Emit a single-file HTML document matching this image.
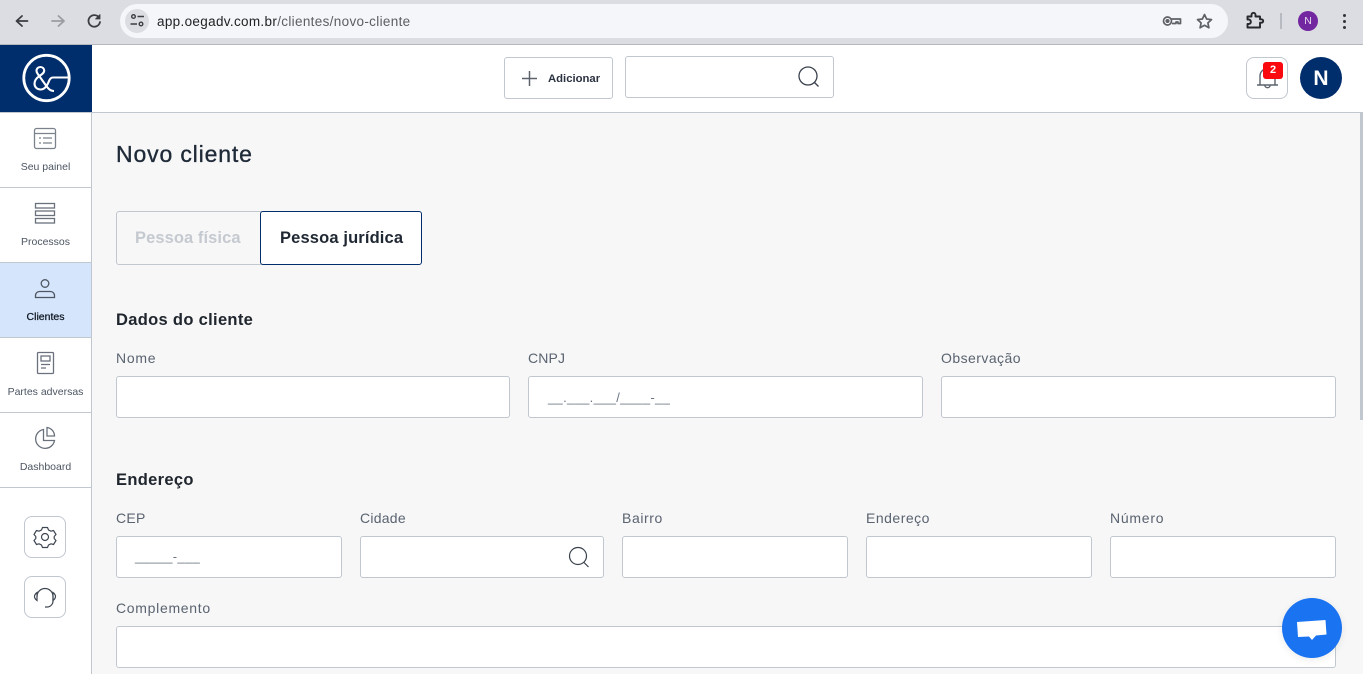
<!DOCTYPE html>
<html lang="pt-BR"><head><meta charset="utf-8"><title>Novo cliente</title>
<style>
*{box-sizing:border-box}
html,body{margin:0;padding:0;width:1363px;height:674px;overflow:hidden;background:#f7f7f7;font-family:"Liberation Sans",sans-serif;color:#1c2533}
.a{position:absolute}
svg{position:absolute;overflow:visible}
.inp{position:absolute;height:42px;background:#fff;border:1px solid #c1c7cf;border-radius:3px}
.lbl{position:absolute;font-size:14px;line-height:18px;color:#5a6370;white-space:nowrap;letter-spacing:.25px}
.h2{position:absolute;font-size:16.5px;font-weight:bold;line-height:20px;color:#20262e;white-space:nowrap;letter-spacing:.32px}
.nav{position:absolute;left:0;width:91px;height:75px;border-bottom:1px solid #c1c7cf;background:#fff}
.nav span{position:absolute;left:0;width:91px;text-align:center;top:47px;font-size:10.5px;line-height:14px;color:#4c5562;white-space:nowrap}
.ph{position:absolute;font-size:13px;color:#6b7380;white-space:nowrap;letter-spacing:.32px}
.sq{position:absolute;left:24px;width:42px;height:42px;border:1px solid #c1c7cf;border-radius:8px;background:#fff}
</style></head><body>

<!-- browser chrome -->
<div class="a" style="left:0;top:0;width:1363px;height:45px;background:#dcdde2;border-bottom:1px solid #b5b7bc"></div>
<svg style="left:0;top:0" width="110" height="44" fill="none" stroke-linecap="round" stroke-linejoin="round">
<path d="M27.500 21H17M22 16l-5.500 5 5.500 5" stroke="#3b3d42" stroke-width="1.800"/>
<path d="M52 21h11.500M58.500 16l5.500 5-5.500 5" stroke="#9a9ca1" stroke-width="1.800"/>
<path d="M99 17.500a5.800 5.800 0 1 0 1 4.500" stroke="#3b3d42" stroke-width="1.800"/>
<path d="M100 14.500v4.500h-4.500z" fill="#3b3d42" stroke="#3b3d42" stroke-width=".8"/>
</svg>
<div class="a" style="left:120px;top:4px;width:1108px;height:34px;border-radius:17px;background:#f4f6f9"></div>
<div class="a" style="left:125px;top:9px;width:24px;height:24px;border-radius:12px;background:#dcdde2"></div>
<svg style="left:125px;top:9px" width="24" height="24" fill="none" stroke="#3b3d42" stroke-width="1.400">
<circle cx="8.500" cy="7.500" r="1.800"/><path d="M12.500 7.500H19M5.500 15H12"/><circle cx="16" cy="15" r="1.800"/>
</svg>
<div class="a" style="left:157px;top:14px;font-size:13.500px;line-height:16px;color:#222;white-space:nowrap;letter-spacing:.33px">app.oegadv.com.br<span style="color:#5b5e63">/clientes/novo-cliente</span></div>
<svg style="left:1160px;top:10px" width="60" height="24" fill="none" stroke="#5e6166" stroke-width="1.700" stroke-linejoin="round">
<circle cx="7.500" cy="11" r="4"/><path d="M11.500 9H20.500V13.500H18V12H16V13.500H12"/><circle cx="7.500" cy="11" r="1.200" fill="#5e6166"/>
<path d="M44.500 4.500l2.100 4.500 4.900.6-3.600 3.300 1 4.900-4.400-2.500-4.400 2.500 1-4.900-3.600-3.300 4.900-.6z"/>
</svg>
<svg style="left:1244px;top:10px" width="24" height="24" fill="none" stroke="#26282c" stroke-width="1.900" stroke-linejoin="round">
<path d="M3.500 6.500H7.500V4.800A2 2 0 0 1 11.500 4.800V6.500H16V9.300H17.500A1.700 1.700 0 0 1 17.500 12.700H16V17.500H3.500V14H5A2.300 2.300 0 0 0 5 9.500H3.500Z"/>
</svg>
<div class="a" style="left:1280px;top:13px;width:2px;height:16px;background:#b7bac0"></div>
<div class="a" style="left:1298px;top:11px;width:20px;height:20px;border-radius:10px;background:#7226a0;color:#e8dcf0;font-size:10.500px;line-height:20px;text-align:center">N</div>
<div class="a" style="left:1342.500px;top:14px;width:3px;height:3px;border-radius:2px;background:#33353a"></div>
<div class="a" style="left:1342.500px;top:20px;width:3px;height:3px;border-radius:2px;background:#33353a"></div>
<div class="a" style="left:1342.500px;top:26px;width:3px;height:3px;border-radius:2px;background:#33353a"></div>

<!-- top bar -->
<div class="a" style="left:0;top:45px;width:1363px;height:68px;background:#fff;border-bottom:1px solid #c1c7cf"></div>
<div class="a" style="left:0;top:45px;width:92px;height:67px;background:#002d6b"></div>
<svg style="left:0;top:45px" width="92" height="67" fill="none" stroke="#fff">
<circle cx="46.500" cy="33" r="22.700" stroke-width="2.800"/>
<path d="M54 46C50.500 46 48.500 44 46 40.500L38.500 30C37 28 36.500 27 36.500 25.800C36.500 23.500 38.300 22 40.300 22C42.500 22 44.200 23.500 44.200 25.500C44.200 28 41.800 29.500 39.500 31C36.500 33 34.500 35 34.500 38.500C34.500 42 37 44.500 40.500 44.500C45 44.500 47.500 40 49 36C50 33.500 51 32.500 53 32.500H69" stroke-width="2.100"/>
</svg>

<div class="a" style="left:504px;top:57px;width:109px;height:42px;border:1px solid #c1c7cf;border-radius:3px;background:#fff"></div>
<svg style="left:504px;top:57px" width="40" height="42" stroke="#5c636d" stroke-width="1.500"><path d="M25.500 14V29M18 21.500H33"/></svg>
<div class="a" style="left:548px;top:72px;font-size:11.300px;font-weight:bold;line-height:15px;color:#2a3240;white-space:nowrap">Adicionar</div>
<div class="a" style="left:625px;top:56px;width:209px;height:42px;border:1px solid #c1c7cf;border-radius:3px;background:#fff"></div>
<svg style="left:795px;top:64px" width="28" height="28" fill="none" stroke="#3a424d" stroke-width="1.300"><circle cx="13" cy="12" r="9"/><path d="M19.500 18.500L23.500 22.500"/></svg>

<div class="a" style="left:1246px;top:57px;width:42px;height:42px;border:1px solid #c1c7cf;border-radius:8px;background:#fff"></div>
<svg style="left:1246px;top:57px" width="42" height="42" fill="none" stroke="#5c636d" stroke-width="1.400">
<path d="M11 28H32M14 28V19A7.500 7.500 0 0 1 29 19V28M18.800 28a2.700 2.700 0 0 0 5.400 0"/>
</svg>
<div class="a" style="left:1263px;top:62px;width:20px;height:17px;border-radius:3px;background:#fa0a0f;color:#fff;font-size:11px;font-weight:bold;line-height:17px;text-align:center">2</div>
<div class="a" style="left:1300px;top:57px;width:42px;height:42px;border-radius:21px;background:#002d6b;color:#fff;font-size:21px;font-weight:bold;line-height:43px;text-align:center">N</div>

<!-- sidebar -->
<div class="a" style="left:0;top:113px;width:92px;height:561px;background:#fff;border-right:1px solid #c1c7cf"></div>
<div class="nav" style="top:113px"><svg style="left:0;top:0" width="91" height="50" fill="none" stroke="#7b828c" stroke-width="1.300"><rect x="34.500" y="15.500" width="21" height="20" rx="2"/><path d="M34.500 20.500H55.500M39 25H41M43 25H52M39 30H41M43 30H52" stroke-width="1.200"/></svg><span>Seu painel</span></div>
<div class="nav" style="top:188px"><svg style="left:0;top:0" width="91" height="50" fill="none" stroke="#6a717c" stroke-width="1.300"><rect x="35.500" y="15.500" width="19" height="4.500"/><rect x="35.500" y="23" width="19" height="4.500"/><rect x="35.500" y="30.500" width="19" height="4.500"/></svg><span>Processos</span></div>
<div class="nav" style="top:263px;background:#d5e5fc"><svg style="left:0;top:0" width="91" height="50" fill="none" stroke="#4e5661" stroke-width="1.300"><circle cx="45" cy="20.500" r="3.800"/><path d="M35.500 34.500V32.500A4 4 0 0 1 39.500 28.500H50.500A4 4 0 0 1 54.500 32.500V34.500Z"/></svg><span style="color:#0f1722;-webkit-text-stroke:.25px #0f1722">Clientes</span></div>
<div class="nav" style="top:338px"><svg style="left:0;top:0" width="91" height="50" fill="none" stroke="#6a717c" stroke-width="1.300"><rect x="37.500" y="14.500" width="16" height="21" rx="1"/><rect x="41" y="18" width="9" height="5"/><path d="M41 26.500H50M41 30H46" stroke-width="1.300"/></svg><span>Partes adversas</span></div>
<div class="nav" style="top:413px"><svg style="left:0;top:0" width="91" height="50" fill="none" stroke="#6a717c" stroke-width="1.300"><path d="M43.500 16.500A9.500 9.500 0 1 0 54.500 27.500H43.500Z"/><path d="M47 14.500A8.500 8.500 0 0 1 54.500 23H47Z"/></svg><span>Dashboard</span></div>
<div class="sq" style="top:516px"></div>
<svg style="left:24px;top:516px" width="42" height="42" fill="none" stroke="#3f4752" stroke-width="1.200" stroke-linejoin="round"><circle cx="21" cy="21" r="3.500"/><path d="M18.500 11.500H23.500L24.500 14L27 15.200L29.500 14.500L32 18.500L30.200 20.500V22.500L32 24.500L29.500 28.500L27 27.800L24.500 29L23.500 31.500H18.500L17.500 29L15 27.800L12.500 28.500L10 24.500L11.800 22.500V20.500L10 18.500L12.500 14.500L15 15.200L17.500 14Z"/></svg>
<div class="sq" style="top:576px"></div>
<svg style="left:24px;top:576px" width="42" height="42" fill="none" stroke="#3f4752" stroke-width="1.200"><path d="M13 20.500A8 8 0 0 1 29 20.500V25A6 6 0 0 1 23 31H21"/><path d="M13 16.500C11 18 10.500 19 10.500 20.500C10.500 22 11 23 13 24.500ZM29 16.500C31 18 31.500 19 31.500 20.500C31.500 22 31 23 29 24.500Z"/></svg>

<!-- main -->
<div class="a" style="left:116px;top:140px;font-size:23px;line-height:28px;color:#1f2a38;white-space:nowrap;letter-spacing:.85px;-webkit-text-stroke:.35px #1f2a38">Novo cliente</div>
<div class="a" style="left:116px;top:211px;width:146px;height:54px;border:1px solid #c1c7cf;border-radius:3px 0 0 3px;background:#f7f7f7;color:#c5c9d0;font-size:16.500px;font-weight:bold;line-height:53px;padding-left:18px;letter-spacing:.08px">Pessoa física</div>
<div class="a" style="left:260px;top:211px;width:162px;height:54px;border:1px solid #002d6b;border-radius:3px;background:#fff;color:#1f2733;font-size:16.500px;font-weight:bold;line-height:53px;padding-left:19px;letter-spacing:.14px">Pessoa jurídica</div>

<div class="h2" style="left:116px;top:310px">Dados do cliente</div>
<div class="lbl" style="left:116px;top:349px;letter-spacing:.75px">Nome</div>
<div class="lbl" style="left:528px;top:349px;letter-spacing:.15px">CNPJ</div>
<div class="lbl" style="left:941px;top:349px;letter-spacing:.45px">Observação</div>
<div class="inp" style="left:116px;top:376px;width:394px"></div>
<div class="inp" style="left:528px;top:376px;width:395px"></div>
<div class="ph" style="left:548px;top:390px">__.___.___/____-__</div>
<div class="inp" style="left:941px;top:376px;width:395px"></div>

<div class="h2" style="left:116px;top:470px">Endereço</div>
<div class="lbl" style="left:116px;top:509px">CEP</div>
<div class="lbl" style="left:360px;top:509px">Cidade</div>
<div class="lbl" style="left:622px;top:509px;letter-spacing:.6px">Bairro</div>
<div class="lbl" style="left:866px;top:509px;letter-spacing:.5px">Endereço</div>
<div class="lbl" style="left:1110px;top:509px;letter-spacing:.75px">Número</div>
<div class="inp" style="left:116px;top:536px;width:226px"></div>
<div class="ph" style="left:135px;top:549px">_____-___</div>
<div class="inp" style="left:360px;top:536px;width:244px"></div>
<svg style="left:565px;top:544px" width="26" height="26" fill="none" stroke="#3a424d" stroke-width="1.200"><circle cx="13" cy="12" r="8.500"/><path d="M19 18.500L23.500 23"/></svg>
<div class="inp" style="left:622px;top:536px;width:226px"></div>
<div class="inp" style="left:866px;top:536px;width:226px"></div>
<div class="inp" style="left:1110px;top:536px;width:226px"></div>
<div class="lbl" style="left:116px;top:599px;letter-spacing:.7px">Complemento</div>
<div class="inp" style="left:116px;top:626px;width:1220px"></div>

<div class="a" style="left:1360px;top:113px;width:3px;height:307px;background:#c1c7cf"></div>

<div class="a" style="left:1282px;top:598px;width:60px;height:60px;border-radius:30px;background:#1a73f0;box-shadow:0 2px 8px rgba(0,0,0,.08)"></div>
<svg style="left:1282px;top:598px" width="60" height="60"><path d="M15 24L43.500 22L44.500 36.500L34 37.500L30 42L27 38.500L16 39Z" fill="#fff"/></svg>
</body></html>
